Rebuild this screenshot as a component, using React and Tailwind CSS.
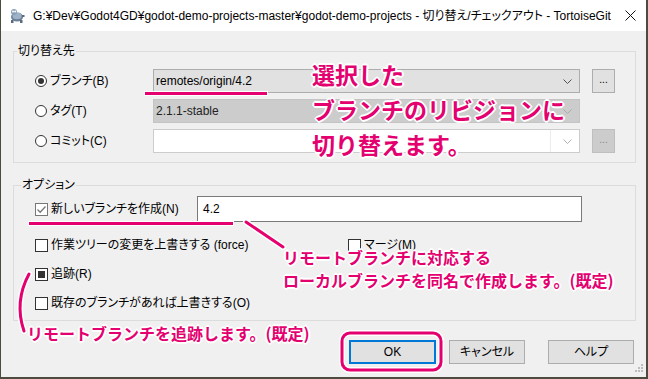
const PINK = "#e4006f";
const outline1 =
  "[text-shadow:1px_1px_0_#fff,-1px_-1px_0_#fff,1px_-1px_0_#fff,-1px_1px_0_#fff,0_1px_0_#fff,0_-1px_0_#fff,1px_0_0_#fff,-1px_0_0_#fff,2px_0_0_#fff,-2px_0_0_#fff,0_2px_0_#fff,0_-2px_0_#fff]";

function Radio({ checked }) {
  return (
    <span className="w-[12px] h-[12px] rounded-full border border-[#333] bg-white flex items-center justify-center shrink-0">
      {checked && <span className="w-[6px] h-[6px] rounded-full bg-[#333]" />}
    </span>
  );
}

function Check({ state, gray }) {
  return (
    <span
      className={
        "w-[13px] h-[13px] border bg-white flex items-center justify-center shrink-0 " +
        (gray ? "border-[#777]" : "border-[#333]")
      }
    >
      {state === "checked" && (
        <svg width="11" height="11" viewBox="0 0 11 11">
          <path d="M1.5 5.5 L4.2 8.2 L9.5 2.5" stroke="#777" strokeWidth="1.3" fill="none" />
        </svg>
      )}
      {state === "mixed" && <span className="w-[7px] h-[7px] bg-[#333]" />}
    </span>
  );
}

function Chevron({ color }) {
  return (
    <svg width="9" height="5" viewBox="0 0 9 5" className="shrink-0">
      <path d="M0.5 0.5 L4.5 4.5 L8.5 0.5" stroke={color} fill="none" />
    </svg>
  );
}

export default function App() {
  return (
    <div className="w-[648px] h-[379px] bg-[#f0f0f0] border-l border-r-2 border-b-2 border-[#4b4b3e] flex flex-col font-['Liberation_Sans','Noto_Sans_CJK_JP',sans-serif] [font-feature-settings:'palt'] text-[12px] leading-[16px] text-black relative overflow-hidden box-border">
      {/* Title bar */}
      <div className="h-[31px] bg-white flex items-center shrink-0">
        <svg width="17" height="17" viewBox="0 0 17 17" className="ml-[7px] shrink-0">
          <ellipse cx="9" cy="10" rx="6" ry="4.5" fill="#6b7f99" />
          <ellipse cx="9" cy="9" rx="4.5" ry="3.2" fill="#9fb2c8" />
          <circle cx="6" cy="5" r="3" fill="#8aa0b8" />
          <circle cx="5" cy="4.5" r="1" fill="#fff" />
          <circle cx="7.2" cy="4.5" r="1" fill="#fff" />
          <rect x="3" y="13" width="2.5" height="3" fill="#5a6b80" />
          <rect x="12" y="13" width="2.5" height="3" fill="#5a6b80" />
          <rect x="14" y="8" width="2.5" height="2" fill="#5a6b80" />
        </svg>
        <span className="ml-[8px] whitespace-nowrap text-[12px]">
          G:¥Dev¥Godot4GD¥godot-demo-projects-master¥godot-demo-projects - 切り替え/チェックアウト - TortoiseGit
        </span>
        <svg width="11" height="11" viewBox="0 0 11 11" className="ml-auto mr-[10px] shrink-0">
          <path d="M0.5 0.5 L10.5 10.5 M10.5 0.5 L0.5 10.5" stroke="#111" strokeWidth="1" />
        </svg>
      </div>

      {/* Group 1 */}
      <div className="mt-[20px] ml-[12px] w-[623px] h-[112px] border border-[#dcdcdc] relative box-border pt-[14px] pl-[21px] shrink-0">
        <span className="absolute left-[3px] top-[-9px] px-[1px] bg-[#f0f0f0] leading-[16px]">切り替え先</span>
        <div className="flex items-center h-[30px]">
          <div className="w-[118px] flex items-center">
            <Radio checked />
            <span className="ml-[3px]">ブランチ(B)</span>
          </div>
          <div className="w-[427px] h-[24px] bg-[#e1e1e1] border border-[#adadad] flex items-center pl-[2px] pr-[7px] box-border">
            <span className="flex-1">remotes/origin/4.2</span>
            <Chevron color="#505050" />
          </div>
          <div className="ml-[12px] w-[23px] h-[24px] bg-[#e1e1e1] border border-[#adadad] flex items-center justify-center box-border text-[10px] leading-[10px] pb-[2px]">
            ...
          </div>
        </div>
        <div className="flex items-center h-[30px]">
          <div className="w-[118px] flex items-center">
            <Radio />
            <span className="ml-[3px]">タグ(T)</span>
          </div>
          <div className="w-[427px] h-[24px] bg-[#cccccc] border border-[#c4c4c4] flex items-center pl-[2px] pr-[7px] box-border">
            <span className="flex-1 text-[#222]">2.1.1-stable</span>
            <Chevron color="#aaaaaa" />
          </div>
        </div>
        <div className="flex items-center h-[30px]">
          <div className="w-[118px] flex items-center">
            <Radio />
            <span className="ml-[3px]">コミット(C)</span>
          </div>
          <div className="w-[427px] h-[24px] bg-white border border-[#cccccc] flex items-center pr-[7px] box-border">
            <span className="flex-1 h-full border-r border-[#ececec]" />
            <span className="w-[12px]" />
            <Chevron color="#b0b0b0" />
          </div>
          <div className="ml-[12px] w-[23px] h-[24px] bg-[#cccccc] border border-[#bfbfbf] flex items-center justify-center box-border text-[10px] leading-[10px] pb-[2px] text-[#8a8a8a]">
            ...
          </div>
        </div>
      </div>

      {/* Group 2 */}
      <div className="mt-[22px] ml-[12px] w-[623px] h-[136px] border border-[#dcdcdc] relative box-border pt-[10px] pl-[21px] shrink-0">
        <span className="absolute left-[7px] top-[-9px] px-[1px] bg-[#f0f0f0] leading-[16px]">オプション</span>
        <div className="flex items-center h-[26px]">
          <div className="w-[162px] flex items-center">
            <Check state="checked" gray />
            <span className="ml-[3px]">新しいブランチを作成(N)</span>
          </div>
          <div className="w-[385px] h-[26px] bg-white border border-[#7a7a7a] flex items-center pl-[5px] box-border">
            4.2
          </div>
        </div>
        <div className="flex items-center h-[20px] mt-[13px]">
          <div className="w-[313px] flex items-center">
            <Check />
            <span className="ml-[3px]">作業ツリーの変更を上書きする (force)</span>
          </div>
          <Check />
          <span className="ml-[3px]">マージ(M)</span>
        </div>
        <div className="flex items-center h-[20px] mt-[9px]">
          <Check state="mixed" />
          <span className="ml-[3px]">追跡(R)</span>
        </div>
        <div className="flex items-center h-[20px] mt-[9px]">
          <Check />
          <span className="ml-[3px]">既存のブランチがあれば上書きする(O)</span>
        </div>
      </div>

      {/* Buttons */}
      <div className="flex mt-[19px] ml-[348px] shrink-0">
        <div className="w-[87px] h-[24px] bg-[#e1e1e1] border-2 border-[#0078d7] flex items-center justify-center box-border">OK</div>
        <div className="ml-[13px] w-[76px] h-[24px] bg-[#e1e1e1] border border-[#adadad] flex items-center justify-center box-border">キャンセル</div>
        <div className="ml-[23px] w-[86px] h-[24px] bg-[#e1e1e1] border border-[#adadad] flex items-center justify-center box-border">ヘルプ</div>
      </div>

      {/* Resize grip */}
      <svg width="10" height="10" viewBox="0 0 10 10" className="absolute right-[2px] bottom-[4px]">
        <rect x="7" y="1" width="2" height="2" fill="#bcbcbc" />
        <rect x="4" y="4" width="2" height="2" fill="#bcbcbc" />
        <rect x="7" y="4" width="2" height="2" fill="#bcbcbc" />
        <rect x="1" y="7" width="2" height="2" fill="#bcbcbc" />
        <rect x="4" y="7" width="2" height="2" fill="#bcbcbc" />
        <rect x="7" y="7" width="2" height="2" fill="#bcbcbc" />
      </svg>

      {/* Annotations */}
      <div className="absolute left-[144px] top-[92px] w-[122px] h-[3px] bg-[#e4006f] shadow-[0_0_0_1px_#fff]" />
      <div className="absolute left-[28px] top-[222px] w-[204px] h-[3px] bg-[#e4006f] shadow-[0_0_0_1px_#fff]" />

      <div
        className={
          "absolute left-[311px] top-[57px] text-[23px] leading-[35px] font-bold whitespace-nowrap text-[#e4006f] font-['Noto_Sans_CJK_JP',sans-serif] [font-feature-settings:normal] " +
          outline1
        }
      >
        <div>選択した</div>
        <div>ブランチのリビジョンに</div>
        <div>切り替えます。</div>
      </div>

      <svg width="648" height="379" className="absolute left-[-1px] top-0 pointer-events-none" viewBox="0 0 648 379">
        <path d="M246 222 L283 247" stroke="#fff" strokeWidth="6" strokeLinecap="round" />
        <path d="M246 222 L283 247" stroke={PINK} strokeWidth="3" strokeLinecap="round" />
        <path d="M29 274 Q14 302 24 331" stroke="#fff" strokeWidth="6" fill="none" strokeLinecap="round" />
        <path d="M29 274 Q14 302 24 331" stroke={PINK} strokeWidth="3" fill="none" strokeLinecap="round" />
        <rect x="342" y="333" width="99" height="37" rx="8" stroke="#fff" strokeWidth="6" fill="none" />
        <rect x="342" y="333" width="99" height="37" rx="8" stroke={PINK} strokeWidth="3" fill="none" />
      </svg>

      <div
        className={
          "absolute left-[282px] top-[246px] text-[16px] leading-[23px] font-bold whitespace-nowrap text-[#e4006f] font-['Noto_Sans_CJK_JP',sans-serif] [font-feature-settings:normal] " +
          outline1
        }
      >
        <div>リモートブランチに対応する</div>
        <div>ローカルブランチを同名で作成します。(既定)</div>
      </div>

      <div
        className={
          "absolute left-[26px] top-[322px] text-[16px] leading-[23px] font-bold whitespace-nowrap text-[#e4006f] font-['Noto_Sans_CJK_JP',sans-serif] [font-feature-settings:normal] " +
          outline1
        }
      >
        リモートブランチを追跡します。(既定)
      </div>
    </div>
  );
}
